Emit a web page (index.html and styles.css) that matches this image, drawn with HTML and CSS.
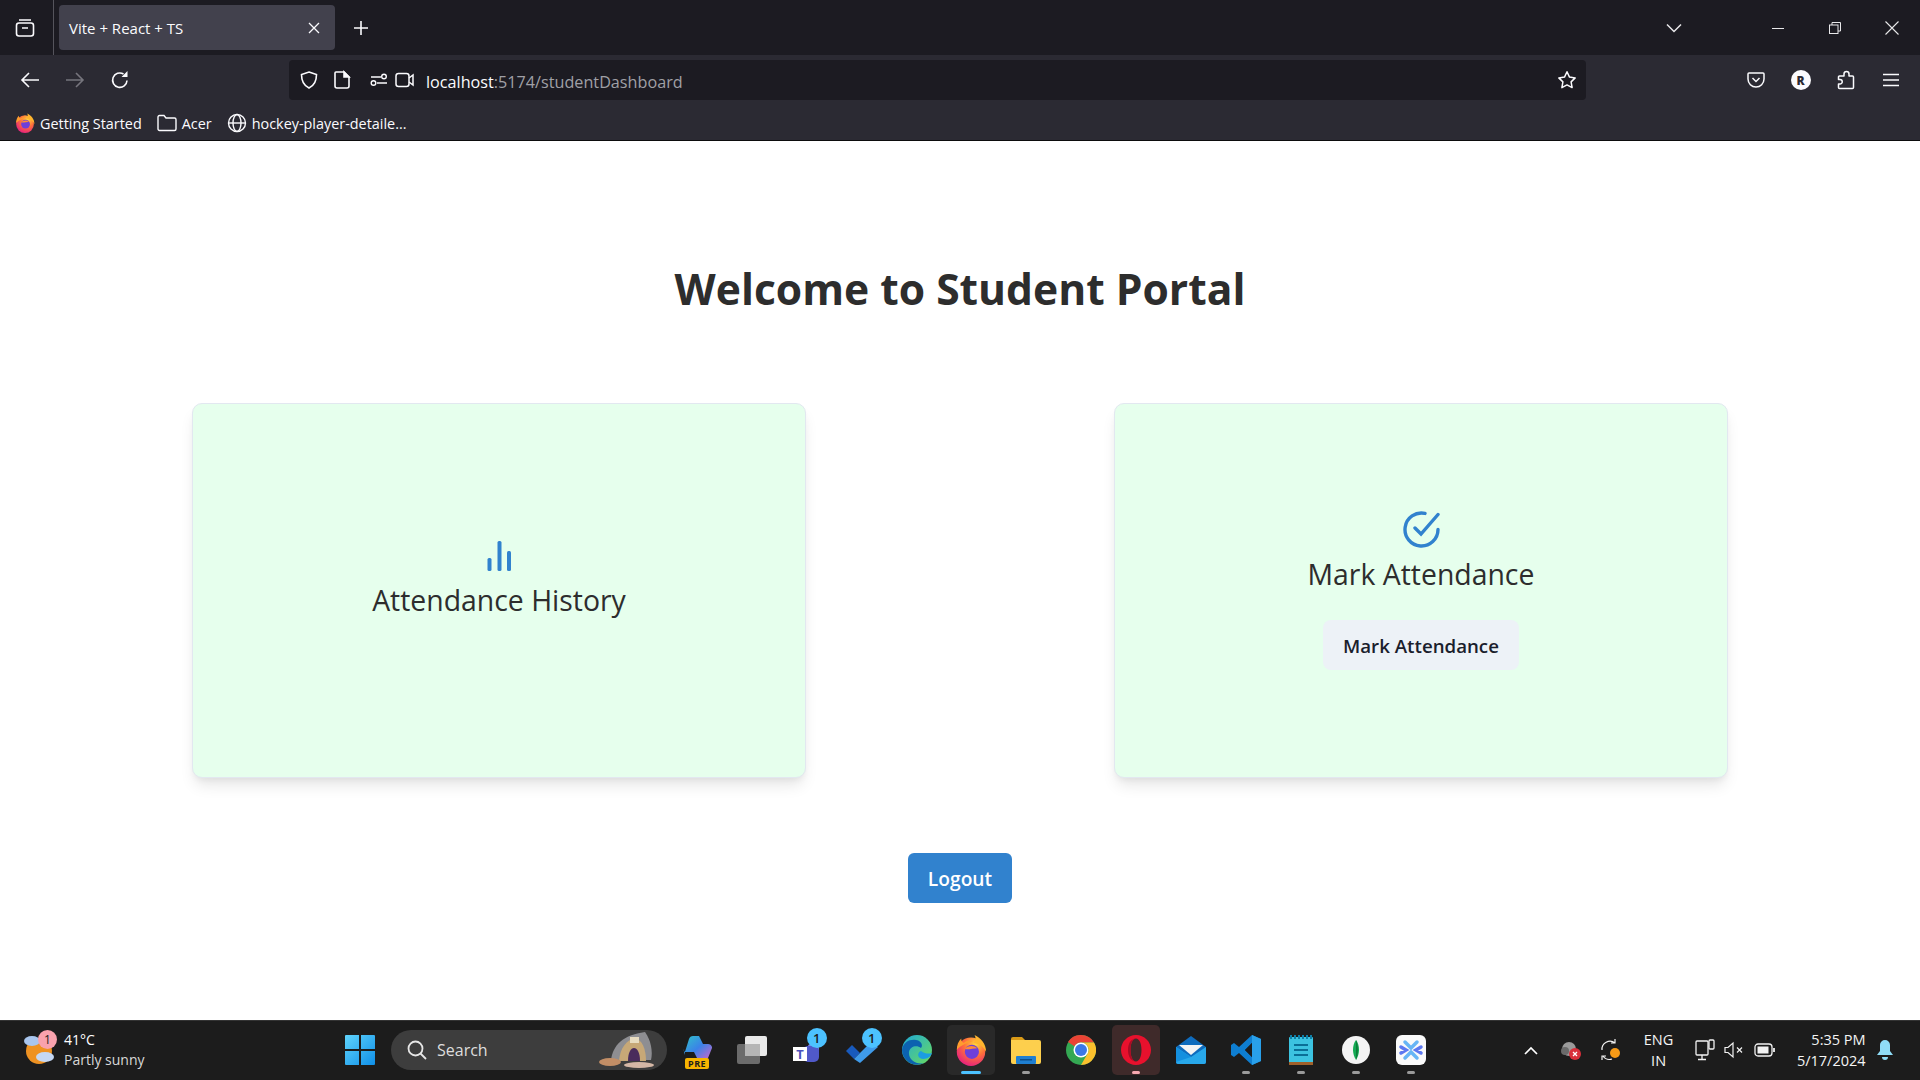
FILE: index.html
```html
<!DOCTYPE html>
<html lang="en">
<head>
  <meta charset="UTF-8">
  <title>Vite + React + TS</title>
  <link rel="stylesheet" href="styles.css">
</head>
<body>
  <div class="tabbar">
    <div class="tab-list-btn">
      <svg width="22" height="22" viewBox="0 0 22 22" fill="none" stroke="#fbfbfe" stroke-width="1.6"><rect x="2.5" y="6" width="17" height="13" rx="2.5"/><path d="M5 3h12M8 11h6"/></svg>
    </div>
    <div class="tab">
      <span class="tab-title">Vite + React + TS</span>
      <svg width="12" height="12" viewBox="0 0 12 12" stroke="#fbfbfe" stroke-width="1.3"><path d="M1 1l10 10M11 1L1 11"/></svg>
    </div>
    <svg class="new-tab" width="16" height="16" viewBox="0 0 16 16" stroke="#fbfbfe" stroke-width="1.6"><path d="M8 1v14M1 8h14"/></svg>
    <svg class="tabs-menu" width="16" height="10" viewBox="0 0 16 10" fill="none" stroke="#e8e8ea" stroke-width="1.5"><path d="M1 1.5l7 7 7-7"/></svg>
    <div class="win-btn"><svg width="12" height="12" viewBox="0 0 12 12" stroke="#e8e8ea"><path d="M0 6.5h12"/></svg></div>
    <div class="win-btn"><svg width="12" height="12" viewBox="0 0 12 12" fill="none" stroke="#e8e8ea"><rect x=".5" y="3" width="8.5" height="8.5"/><path d="M3 3V.5h8.5V9H9"/></svg></div>
    <div class="win-btn"><svg width="14" height="14" viewBox="0 0 14 14" stroke="#e8e8ea" stroke-width="1.1"><path d="M.5.5l13 13M13.5.5l-13 13"/></svg></div>
  </div>

  <div class="toolbar">
    <div class="tool-btn"><svg width="20" height="18" viewBox="0 0 20 18" fill="none" stroke="#fbfbfe" stroke-width="1.6"><path d="M19 9H2M9 2L2 9l7 7"/></svg></div>
    <div class="tool-btn"><svg width="20" height="18" viewBox="0 0 20 18" fill="none" stroke="#76757d" stroke-width="1.6"><path d="M1 9h17M11 2l7 7-7 7"/></svg></div>
    <div class="tool-btn"><svg width="20" height="20" viewBox="0 0 20 20" fill="none" stroke="#fbfbfe" stroke-width="1.6"><path d="M17 10.500A7.200 7.200 0 1 1 13.500 4"/><path d="M17.500 1v6h-6z" fill="#fbfbfe" stroke="none"/></svg></div>
    <div class="urlbar">
      <svg width="20" height="20" viewBox="0 0 20 20" fill="none" stroke="#fbfbfe" stroke-width="1.6"><path d="M10 2l7.500 2.500c0 7-2 11-7.500 13.500C4.500 15.500 2.500 11.500 2.500 4.500z"/></svg>
      <svg class="url-doc" width="18" height="20" viewBox="0 0 18 20" fill="none" stroke="#fbfbfe" stroke-width="1.6"><path d="M3 2h8l5 5v9a2 2 0 0 1-2 2H4a2 2 0 0 1-2-2V3a1 1 0 0 1 1-1z"/><path d="M11 2v5h5z" fill="#fbfbfe"/></svg>
      <svg class="url-perm" width="18" height="14" viewBox="0 0 18 14" fill="none" stroke="#fbfbfe" stroke-width="1.4"><path d="M1 4h10M7 10h10"/><circle cx="14" cy="3.500" r="2.300"/><circle cx="3.500" cy="10" r="2.300"/></svg>
      <svg class="url-cam" width="20" height="16" viewBox="0 0 20 16" fill="none" stroke="#fbfbfe" stroke-width="1.5"><rect x="1" y="1.500" width="13" height="13" rx="2.500"/><path d="M14 6l4-3v10l-4-3"/></svg>
      <span class="url-text">localhost<span class="url-dim">:5174/studentDashboard</span></span>
      <svg class="url-star" width="20" height="20" viewBox="0 0 20 20" fill="none" stroke="#fbfbfe" stroke-width="1.5" stroke-linejoin="round"><path d="M10 1.800l2.500 5.300 5.700.8-4.100 4 1 5.700-5.100-2.700-5.100 2.700 1-5.700-4.100-4 5.700-.8z"/></svg>
    </div>
    <div class="tool-right">
      <div class="tool-btn"><svg width="18" height="18" viewBox="0 0 18 18" fill="none" stroke="#fbfbfe" stroke-width="1.5"><path d="M2 2h14a1 1 0 0 1 1 1v5a8 8 0 0 1-16 0V3a1 1 0 0 1 1-1z"/><path d="M5.500 7L9 10.500 12.500 7"/></svg></div>
      <div class="tool-btn"><span class="avatar">R</span></div>
      <div class="tool-btn"><svg width="18" height="20" viewBox="0 0 18 20" fill="none" stroke="#fbfbfe" stroke-width="1.5" stroke-linejoin="round"><path d="M7 18.500H2.500a1 1 0 0 1-1-1V14h1.500a2 2 0 0 0 0-4.500H1.500V7a1 1 0 0 1 1-1H7V4a2.500 2.500 0 0 1 5 0v2h3.500a1 1 0 0 1 1 1v10.500a1 1 0 0 1-1 1z"/></svg></div>
      <div class="tool-btn"><svg width="16" height="14" viewBox="0 0 16 14" stroke="#fbfbfe" stroke-width="1.500"><path d="M0 1.500h16M0 7h16M0 12.500h16"/></svg></div>
    </div>
  </div>

  <div class="bookmarks">
    <div class="bookmark">
      <svg width="20" height="20" viewBox="0 0 36 36"><use href="#firefox"/></svg>
      <span>Getting Started</span>
    </div>
    <div class="bookmark">
      <svg width="20" height="18" viewBox="0 0 20 18" fill="none" stroke="#fbfbfe" stroke-width="1.400"><path d="M1 15V3a1.500 1.500 0 0 1 1.500-1.500h4.500l2 2.500h8.500A1.500 1.500 0 0 1 19 5.500V15a1.500 1.500 0 0 1-1.500 1.500h-15A1.500 1.500 0 0 1 1 15z"/></svg>
      <span>Acer</span>
    </div>
    <div class="bookmark">
      <svg width="20" height="20" viewBox="0 0 20 20" fill="none" stroke="#fbfbfe" stroke-width="1.400"><circle cx="10" cy="10" r="8.500"/><ellipse cx="10" cy="10" rx="4" ry="8.500"/><path d="M1.500 10h17"/></svg>
      <span>hockey-player-detaile...</span>
    </div>
  </div>

  <main class="page">
    <h1 class="title">Welcome to Student Portal</h1>
    <div class="cards">
      <div class="card">
        <svg width="36" height="38" viewBox="0 0 36 38" fill="#3182ce"><rect x="6.500" y="22" width="4" height="13" rx="1.500"/><rect x="16.500" y="5" width="4" height="30" rx="1.500"/><rect x="26" y="15" width="4" height="20" rx="1.500"/></svg>
        <p class="card-label">Attendance History</p>
      </div>
      <div class="card">
        <svg width="37" height="37" viewBox="0 0 37 37" fill="none" stroke="#3182ce" stroke-width="3.400" stroke-linecap="round"><path d="M35 18.500A16.500 16.500 0 1 1 22 2.400"/><path d="M12 17l6 6L35 3.500"/></svg>
        <p class="card-label">Mark Attendance</p>
        <button class="mark-btn">Mark Attendance</button>
      </div>
    </div>
    <button class="logout-btn">Logout</button>
  </main>

  <footer class="taskbar">
    <div class="weather">
      <div class="weather-icon">
        <svg width="32" height="34" viewBox="0 0 32 34"><circle cx="15" cy="19" r="13" fill="#ee9222"/><ellipse cx="8" cy="9" rx="8" ry="5" fill="#a9c6ee"/><ellipse cx="21" cy="25" rx="9" ry="5" fill="#c5d8f4"/></svg>
        <span class="weather-badge">1</span>
      </div>
      <div class="weather-text">
        <span class="temp">41°C</span>
        <span class="cond">Partly sunny</span>
      </div>
    </div>

    <svg class="start" width="30" height="30" viewBox="0 0 30 30"><defs><linearGradient id="win" x1="0" y1="0" x2="1" y2="1"><stop offset="0" stop-color="#5fd3fb"/><stop offset="1" stop-color="#0f8fe8"/></linearGradient></defs><path fill="url(#win)" d="M0 1a1 1 0 0 1 1-1h13v14H0zM16 0h13a1 1 0 0 1 1 1v13H16zM0 16h14v14H1a1 1 0 0 1-1-1zM16 16h14v13a1 1 0 0 1-1 1H16z"/></svg>

    <div class="search">
      <svg width="22" height="22" viewBox="0 0 22 22" fill="none" stroke="#e6e6e6" stroke-width="1.800"><circle cx="9.500" cy="9.500" r="7"/><path d="M14.500 14.500L20 20"/></svg>
      <span>Search</span>
      <svg class="search-art" width="56" height="36" viewBox="0 0 56 36"><path d="M12 28C14 13 24 3 46 0c6 8 8 20 6 28z" fill="#8e8e92"/><path d="M20 29C21 16 28 7 36 7c7 0 11 10 11 22z" fill="#c7a877"/><path d="M29 29c0-9 3-13 6-13s6 4 6 13z" fill="#4a2c5c"/><path d="M31 5h9v6h-9z" fill="#e8dcc0"/><ellipse cx="11" cy="30" rx="11" ry="4" fill="#c28e66"/><ellipse cx="40" cy="33" rx="15" ry="3" fill="#d4b7a6"/></svg>
    </div>

    <div class="apps">
      <div class="app">
        <svg width="32" height="32" viewBox="0 0 32 32"><defs><linearGradient id="cp" x1="0" y1="0" x2="1" y2="1"><stop offset="0" stop-color="#2fc4c9"/><stop offset=".5" stop-color="#3b82e8"/><stop offset="1" stop-color="#d566c9"/></linearGradient></defs><path fill="url(#cp)" d="M3 21L8 5q1-3 4-3h6l4 8h5q3 0 4 3v1l-4 10q-1 2-4 2h-6l-4-8H5q-3 0-2-3z"/></svg>
        <span class="pre-tag">PRE</span>
      </div>
      <div class="app">
        <svg width="30" height="28" viewBox="0 0 30 28"><rect x="0" y="8" width="23" height="20" rx="2" fill="#6b6b6b"/><rect x="8" y="0" width="22" height="20" rx="2" fill="#e9e9e9"/><rect x="8" y="8" width="15" height="12" fill="#b5b5b5"/></svg>
      </div>
      <div class="app">
        <svg width="28" height="28" viewBox="0 0 28 28"><circle cx="20" cy="13" r="6" fill="#7b83eb"/><rect x="10" y="10" width="16" height="16" rx="5" fill="#5059c9"/><rect x="0" y="11" width="14" height="14" fill="#fff"/><text class="teams-t" x="7" y="22.500">T</text></svg>
        <span class="app-badge">1</span>
      </div>
      <div class="app">
        <svg width="32" height="26" viewBox="0 0 32 26"><path d="M0 14l6-6 8 8-6 6z" fill="#185abd"/><path d="M8 22L26 4l6 6-18 16z" fill="#3f9bea"/></svg>
        <span class="app-badge">1</span>
      </div>
      <div class="app">
        <svg width="32" height="32" viewBox="0 0 32 32"><defs><linearGradient id="edge" x1="0" y1="0" x2="1" y2="1"><stop offset="0" stop-color="#1ea9d8"/><stop offset="1" stop-color="#6bdc5c"/></linearGradient></defs><circle cx="16" cy="16" r="15" fill="url(#edge)"/><path d="M1 16C2 8 9 5 15 6c6 1 7 6 5 8-4-3-11-2-12 4-1 7 7 13 15 11a15 15 0 0 1-22-13z" fill="#0c62b0"/><path d="M31 19c-2 6-9 7-12 5s-2-6 1-7c4 3 8 3 11 2z" fill="#1b9de2"/></svg>
      </div>
      <div class="app app-active">
        <svg width="32" height="32" viewBox="0 0 36 36"><g id="firefox"><defs><radialGradient id="fx" cx=".65" cy=".25" r=".85"><stop offset="0" stop-color="#ffd53d"/><stop offset=".45" stop-color="#ff7139"/><stop offset="1" stop-color="#e31587"/></radialGradient></defs><circle cx="18" cy="20" r="16" fill="url(#fx)"/><path d="M22 1c7 3 13 10 13 19-3-6-7-9-14-10 2-3 3-5 1-9z" fill="#ffb52e"/><path d="M2 18C2 12 4 8 7 5c0 3 1 4 3 5 2-2 6-3 10-2-5 2-13 4-18 10z" fill="#ff9c2e"/><circle cx="19" cy="20" r="8" fill="#6e3fd8"/><path d="M11 17c3-4 10-5 14-1-4 0-10 2-14 1z" fill="#ff8a36"/></g></svg>
        <span class="pip pip-blue"></span>
      </div>
      <div class="app">
        <svg width="30" height="28" viewBox="0 0 30 28"><path d="M0 3a2 2 0 0 1 2-2h9l3 3H0z" fill="#d99a17"/><path d="M0 4h28a2 2 0 0 1 2 2v20a2 2 0 0 1-2 2H2a2 2 0 0 1-2-2z" fill="#fdcf4d"/><rect x="5" y="20" width="20" height="8" rx="1" fill="#1f7fd1"/><rect x="9" y="23" width="12" height="1.500" fill="#0c4f8c"/></svg>
        <span class="pip"></span>
      </div>
      <div class="app">
        <svg width="30" height="30" viewBox="0 0 30 30"><circle cx="15" cy="15" r="15" fill="#34a853"/><path d="M15 0a15 15 0 0 1 13 7.500H15A7.500 7.500 0 0 0 8.500 11.200L2 7A15 15 0 0 1 15 0z" fill="#ea4335"/><path d="M28 7.500A15 15 0 0 1 15 30l6.500-11.200A7.500 7.500 0 0 0 15 7.500z" fill="#fbc02d"/><circle cx="15" cy="15" r="7.500" fill="#fff"/><circle cx="15" cy="15" r="6" fill="#3b78e7"/></svg>
      </div>
      <div class="app app-opera">
        <svg width="30" height="30" viewBox="0 0 30 30"><path fill="#e8112d" fill-rule="evenodd" d="M15 0c8.300 0 15 6.700 15 15s-6.700 15-15 15S0 23.300 0 15 6.700 0 15 0zm0 3.500c-3.300 0-5.500 5-5.500 11.500s2.200 11.500 5.500 11.500 5.500-5 5.500-11.500S18.300 3.500 15 3.500z"/><path fill="#a70d24" fill-rule="evenodd" d="M15 3.500c-3.300 0-5.500 5-5.500 11.500s2.200 11.500 5.500 11.500c-5 0-8-5-8-11.500s3-11.500 8-11.500z"/></svg>
        <span class="pip pip-pink"></span>
      </div>
      <div class="app">
        <svg width="30" height="28" viewBox="0 0 30 28"><path d="M15 0l15 11v15a2 2 0 0 1-2 2H2a2 2 0 0 1-2-2V11z" fill="#0f6cbd"/><path d="M3 9h24L15 19z" fill="#f4f4f4"/><path d="M0 11l15 10 15-10v15a2 2 0 0 1-2 2H2a2 2 0 0 1-2-2z" fill="#28a8ea"/><path d="M0 26V11l15 10z" fill="#1490df"/></svg>
      </div>
      <div class="app">
        <svg width="30" height="30" viewBox="0 0 30 30"><path d="M21 0l9 4v22l-9 4L8 18l-5 4-3-2V10l3-2 5 4zm0 8l-7 7 7 7z" fill="#0e7ed1"/><path d="M21 0l9 4v22l-9 4z" fill="#29a0ea"/><path d="M21 8l-7 7 7 7z" fill="#1c1c1c"/></svg>
        <span class="pip"></span>
      </div>
      <div class="app">
        <svg width="24" height="30" viewBox="0 0 24 30"><rect x="0" y="2" width="24" height="28" rx="1" fill="#3cc3e0"/><rect x="0" y="27" width="24" height="3" fill="#a0602a"/><path d="M1 0h2v4H1zM5 0h2v4H5zM9 0h2v4H9zM13 0h2v4h-2zM17 0h2v4h-2zM21 0h2v4h-2z" fill="#0d7fa8"/><path d="M5 9h14v2H5zM5 14h14v2H5zM5 19h14v2H5z" fill="#0a6f96"/></svg>
        <span class="pip"></span>
      </div>
      <div class="app">
        <svg width="28" height="28" viewBox="0 0 28 28"><circle cx="14" cy="14" r="14" fill="#f4f4f4"/><path d="M14 4c4 5 4 14 0 20-4-6-4-15 0-20z" fill="#13aa52"/><path d="M14 4c2.500 6 2.500 14 0 20z" fill="#0d7a3a"/></svg>
        <span class="pip"></span>
      </div>
      <div class="app">
        <svg width="30" height="30" viewBox="0 0 30 30"><rect width="30" height="30" rx="6" fill="#fafafa"/><path d="M9 7l6 6 6-6M9 23l6-6 6 6" fill="none" stroke="#67b5f5" stroke-width="3.500" stroke-linecap="round"/><path d="M5 12l5 3-5 3M25 12l-5 3 5 3" fill="none" stroke="#5d78f0" stroke-width="3.500" stroke-linecap="round"/></svg>
        <span class="pip"></span>
      </div>
    </div>

    <div class="tray">
      <svg class="tray-chevron" width="14" height="9" viewBox="0 0 14 9" fill="none" stroke="#fff" stroke-width="1.700"><path d="M1 8l6-6 6 6"/></svg>
      <svg class="tray-cloud" width="22" height="22" viewBox="0 0 22 22"><circle cx="9" cy="10" r="7" fill="#9a9a9a"/><circle cx="5" cy="12" r="4" fill="#6a6a6a"/><circle cx="15" cy="15" r="6" fill="#d92f3a"/><path d="M13 13l4 4M17 13l-4 4" stroke="#fff" stroke-width="1.300"/></svg>
      <svg class="tray-sync" width="22" height="24" viewBox="0 0 22 24" fill="none" stroke="#f2f2f2" stroke-width="1.200"><path d="M2 12a8 8 0 0 1 13-7M15 1v4h-4M12 21a8 8 0 0 1-9-3M2 22v-4h4"/><circle cx="15" cy="15" r="5" fill="#f59a17" stroke="none"/></svg>
      <div class="lang"><span>ENG</span><span>IN</span></div>
      <svg class="tray-net" width="20" height="22" viewBox="0 0 20 22" fill="none" stroke="#f2f2f2" stroke-width="1.300"><rect x="1" y="2" width="12" height="14" rx="1"/><path d="M7 16v4M3 20.500h8"/><rect x="14" y="1" width="5" height="9" rx="1" fill="#1c1c1c"/></svg>
      <svg class="tray-vol" width="20" height="18" viewBox="0 0 20 18" fill="none" stroke="#f2f2f2" stroke-width="1.200"><path d="M1 6.500h3L9 2v14l-5-4.500H1zM13 6.500l5 5M18 6.500l-5 5"/></svg>
      <svg class="tray-bat" width="22" height="14" viewBox="0 0 22 14" fill="none" stroke="#f2f2f2" stroke-width="1.300"><rect x="1" y="1" width="17" height="12" rx="3"/><rect x="3.500" y="3.500" width="11" height="7" fill="#f2f2f2" stroke="none"/><path d="M20 5v4" stroke-width="1.800"/></svg>
      <div class="clock"><span>5:35 PM</span><span>5/17/2024</span></div>
      <svg class="tray-bell" width="16" height="20" viewBox="0 0 16 20" fill="#8fdcf7"><path d="M8 0a5 5 0 0 1 5 5v6l3 4H0l3-4V5a5 5 0 0 1 5-5zM5 17h6a3 3 0 0 1-6 0z"/></svg>
    </div>
  </footer>
</body>
</html>
```

FILE: styles.css
```css
* {
  box-sizing: border-box;
}
html, body {
  margin: 0;
  padding: 0;
}
body {
  width: 1920px;
  height: 1080px;
  overflow: hidden;
  display: flex;
  flex-direction: column;
  font-family: "Open Sans", "Noto Sans", sans-serif;
  background-color: #ffffff;
}

/* browser chrome */
.tabbar {
  height: 55px;
  background-color: #1c1b22;
  display: flex;
  align-items: center;
  color: #fbfbfe;
}
.tab-list-btn {
  width: 54px;
  height: 55px;
  display: flex;
  align-items: center;
  justify-content: center;
  border-right: 1px solid #55545c;
  padding-right: 4px;
}
.tab {
  width: 276px;
  height: 45px;
  margin-left: 5px;
  padding: 0 15px 0 10px;
  background-color: #42414d;
  border-radius: 4px;
  display: flex;
  align-items: center;
  justify-content: space-between;
}
.tab-title {
  padding-top: 1px;
  font-size: 15px;
}
.new-tab {
  margin-left: 18px;
}
.tabs-menu {
  margin-left: auto;
  margin-right: 67px;
}
.win-btn {
  width: 57px;
  height: 55px;
  display: flex;
  align-items: center;
  justify-content: center;
}

.toolbar {
  height: 50px;
  padding: 0 7px;
  background-color: #2b2a33;
  display: flex;
  align-items: center;
}
.tool-btn {
  width: 45px;
  height: 40px;
  display: flex;
  align-items: center;
  justify-content: center;
}
.urlbar {
  width: 1297px;
  height: 40px;
  margin-left: 147px;
  padding: 0 9px 0 10px;
  background-color: #1c1b22;
  border-radius: 4px;
  display: flex;
  align-items: center;
}
.url-doc {
  margin-left: 14px;
}
.url-perm {
  margin-left: 19px;
}
.url-cam {
  margin-left: 7px;
}
.url-text {
  margin-left: 11px;
  padding-top: 3px;
  font-size: 16.2px;
  color: #fbfbfe;
}
.url-dim {
  color: #a0a0a6;
}
.url-star {
  margin-left: auto;
}
.tool-right {
  display: flex;
  margin-left: auto;
}
.avatar {
  width: 20px;
  height: 20px;
  border-radius: 50%;
  background-color: #fbfbfe;
  color: #2b2a33;
  font-size: 12px;
  font-weight: 800;
  display: flex;
  align-items: center;
  justify-content: center;
}

.bookmarks {
  height: 36px;
  padding: 1px 0 0 15px;
  background-color: #2b2a33;
  border-bottom: 1px solid #0c0c0d;
  display: flex;
  align-items: center;
  gap: 15px;
}
.bookmark {
  display: flex;
  align-items: center;
  gap: 5px;
  font-size: 14.4px;
  color: #fbfbfe;
}

/* page */
.page {
  flex: 1;
  display: flex;
  flex-direction: column;
  align-items: center;
}
.title {
  margin: 115px 0 0;
  font-size: 42.6px;
  line-height: 64px;
  font-weight: 700;
  color: #2d2d2d;
}
.cards {
  width: 100%;
  margin-top: 83px;
  padding: 0 192px;
  display: grid;
  grid-template-columns: 614px 614px;
  justify-content: space-between;
}
.card {
  height: 375px;
  background-color: #e6ffed;
  border: 1px solid #e2e8f0;
  border-radius: 10px;
  box-shadow: 0 10px 15px -3px rgba(0, 0, 0, 0.1), 0 4px 6px -2px rgba(0, 0, 0, 0.05);
  display: flex;
  flex-direction: column;
  align-items: center;
  justify-content: center;
}
.card-label {
  margin: 6px 0 26px;
  font-size: 28.4px;
  line-height: 40px;
  color: #2d2d2d;
}
.mark-btn {
  width: 196px;
  height: 50px;
  background-color: #edf2f7;
  color: #1a202c;
  border: none;
  border-radius: 8px;
  font-family: inherit;
  font-size: 18.7px;
  font-weight: 600;
}
.logout-btn {
  width: 104px;
  height: 50px;
  margin-top: 75px;
  background-color: #3182ce;
  color: #ffffff;
  border: none;
  border-radius: 6px;
  font-family: inherit;
  font-size: 19.2px;
  font-weight: 600;
}

/* windows taskbar */
.taskbar {
  height: 60px;
  padding-bottom: 1px;
  background-color: #1c1c1c;
  border-top: 1px solid #333333;
  display: flex;
  align-items: center;
  color: #ffffff;
}
.weather {
  width: 345px;
  padding-left: 24px;
  display: flex;
  align-items: center;
}
.weather-icon {
  position: relative;
  width: 40px;
  height: 36px;
}
.weather-badge {
  position: absolute;
  top: -2px;
  left: 14px;
  width: 19px;
  height: 19px;
  border-radius: 50%;
  background-color: #f9a2ad;
  color: #1c1c1c;
  font-size: 12px;
  line-height: 19px;
  text-align: center;
}
.weather-text {
  display: flex;
  flex-direction: column;
  font-size: 14px;
  line-height: 20px;
}
.cond {
  color: #d8d8d8;
}
.search {
  width: 276px;
  height: 40px;
  margin-left: 16px;
  padding: 0 12px 0 15px;
  background-color: #3d3d3d;
  border-radius: 20px;
  display: flex;
  align-items: center;
  gap: 9px;
  font-size: 16px;
  color: #dddddd;
}
.search-art {
  margin-left: auto;
}
.apps {
  margin-left: 6px;
  display: flex;
  gap: 6.9px;
}
.app {
  position: relative;
  width: 48px;
  height: 50px;
  border-radius: 5px;
  display: flex;
  align-items: center;
  justify-content: center;
}
.app-active {
  background-color: #292929;
}
.app-opera {
  background-color: #3f2a2a;
}
.pip {
  position: absolute;
  bottom: 1px;
  left: 20px;
  width: 8px;
  height: 3px;
  border-radius: 2px;
  background-color: #9a9a9a;
}
.pip-blue {
  left: 14px;
  width: 20px;
  background-color: #4cc2ff;
}
.pip-pink {
  background-color: #f7a8b0;
}
.app-badge {
  position: absolute;
  top: 3px;
  right: 4px;
  width: 20px;
  height: 20px;
  border-radius: 50%;
  background-color: #4cc2ff;
  color: #1c1c1c;
  font-size: 13px;
  font-weight: 600;
  line-height: 20px;
  text-align: center;
}
.pre-tag {
  position: absolute;
  bottom: 6px;
  left: 12px;
  padding: 0 3px;
  background-color: #f7b500;
  border-radius: 2px;
  color: #1c1c1c;
  font-size: 9px;
  font-weight: 700;
  line-height: 11px;
  letter-spacing: 0.5px;
}
.teams-t {
  font-family: "Open Sans", sans-serif;
  font-size: 13px;
  font-weight: 700;
  fill: #4b53bc;
  text-anchor: middle;
}
.tray {
  flex: 1;
  display: flex;
  align-items: center;
  font-size: 14.5px;
  color: #f5f5f5;
}
.tray-chevron {
  margin-left: 89px;
}
.tray-cloud {
  margin-left: 22px;
}
.tray-sync {
  margin-left: 18px;
}
.lang {
  width: 40px;
  margin-left: 17px;
  display: flex;
  flex-direction: column;
  align-items: center;
  line-height: 21px;
}
.tray-net {
  margin-left: 16px;
}
.tray-vol {
  margin-left: 9px;
}
.tray-bat {
  margin-left: 10px;
}
.clock {
  width: 90px;
  display: flex;
  flex-direction: column;
  align-items: flex-end;
  line-height: 21px;
}
.tray-bell {
  margin-left: 11px;
}
```
